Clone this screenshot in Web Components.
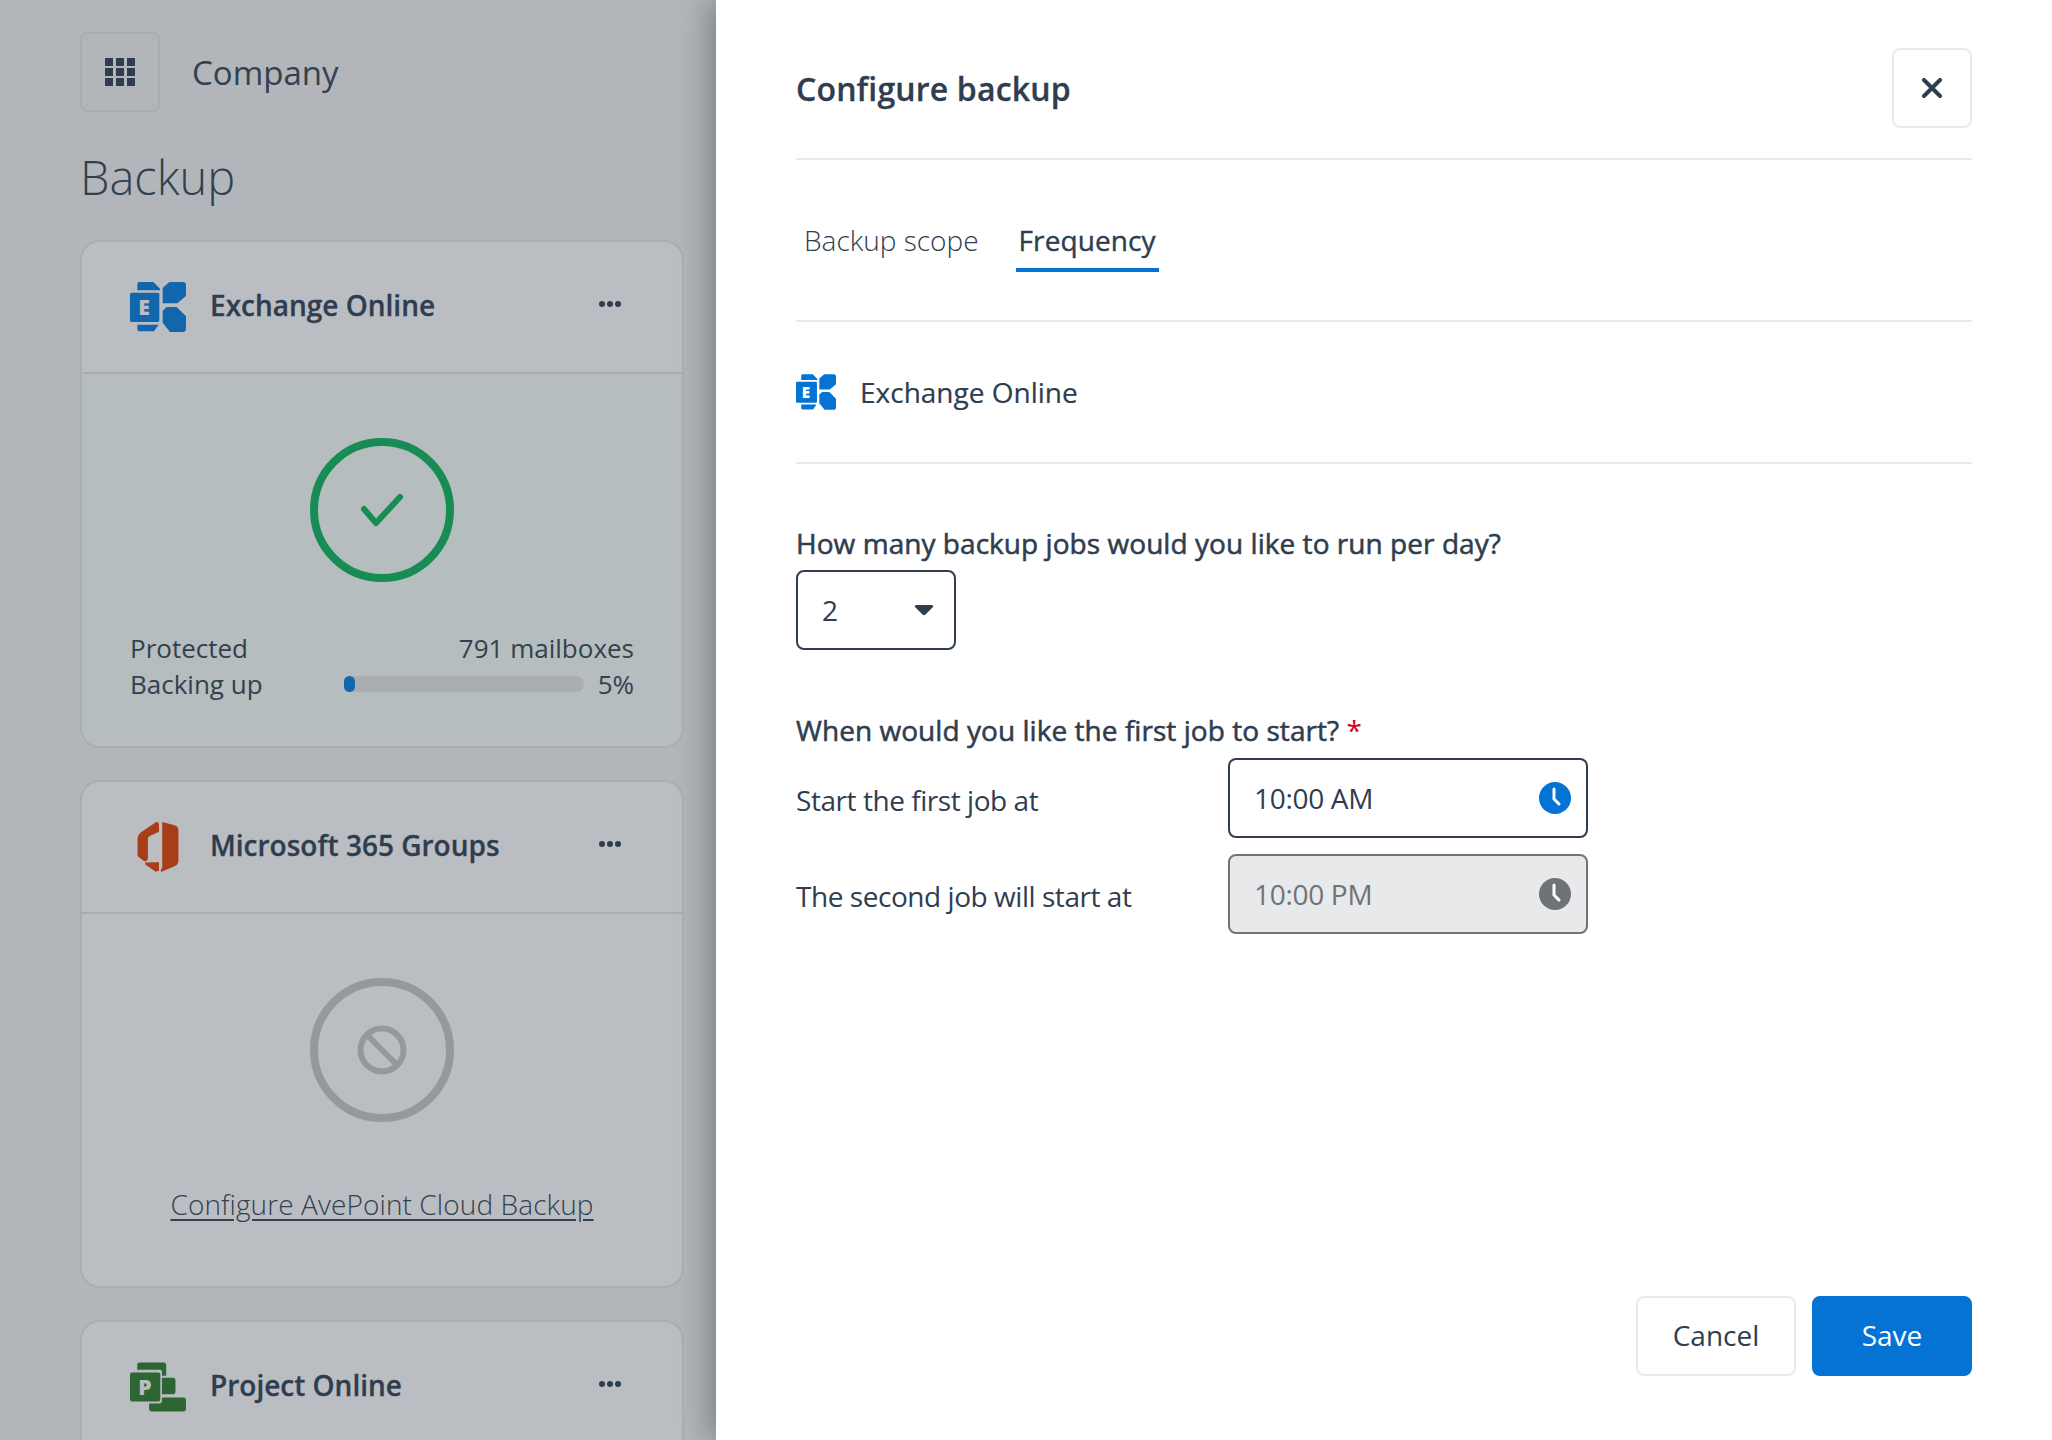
<!DOCTYPE html>
<html lang="en">
<head>
<meta charset="utf-8">
<title>Configure backup</title>
<style>
  html, body { margin: 0; height: 100%; }
  body { overflow: hidden; font-family: "Open Sans", "Noto Sans", sans-serif; color: #2f3d4f; }
</style>
</head>
<body>
<backup-page>
  <backup-panel slot="panel" company="Company" heading="Backup">
    <service-card name="Exchange Online" logo="exchange" state="ok">
      <status-rows></status-rows>
    </service-card>
    <service-card name="Microsoft 365 Groups" logo="office" state="off">
      <a-link>Configure AvePoint Cloud Backup</a-link>
    </service-card>
    <service-card name="Project Online" logo="project" state="off"></service-card>
  </backup-panel>
  <config-drawer slot="drawer" heading="Configure backup"></config-drawer>
</backup-page>

<script>
const LOGOS = {
  exchange: (color, letter) => `
    <svg viewBox="30 30 168 150" part="logo">
      <g fill="${color}">
        <path d="M58 30H100L120 50V55H52V36Q52 30 58 30Z"/>
        <rect x="30" y="62" width="88" height="88" rx="5"/>
        <path d="M52 158H116L102 178H58Q52 178 52 172Z"/>
        <path d="M148 30H188Q198 30 198 40V72L172 94H128V48Z"/>
        <path d="M128 116L140 105H170L198 133V168Q198 180 188 180H150L128 152Z"/>
      </g>
      <text x="72" y="130" text-anchor="middle" font-family="'Open Sans', sans-serif" font-weight="800" font-size="64" fill="${letter}">E</text>
    </svg>`,
  office: (color) => `
    <svg viewBox="52 28 126 154" part="logo">
      <g fill="${color}">
        <path d="M108 29Q118 26 118 36V58L88 72Q84 74 84 80V136Q84 152 72 148L58 138Q52 134 52 128V80Q52 68 62 60Z"/>
        <path d="M128 28L166 38Q178 42 178 54V146Q178 160 166 164L124 182V174L128 170Z"/>
        <path d="M75 153L118 152V178L108 181L77 160Z"/>
      </g>
    </svg>`,
  project: (color, letter) => `
    <svg viewBox="30 32 170 148" part="logo">
      <g fill="${color}">
        <path d="M58 32H132Q140 32 140 40V72H127V60Q127 54 120 54H52V38Q52 32 58 32Z"/>
        <rect x="30" y="62" width="92" height="88" rx="6"/>
        <path d="M127 78H160Q168 78 168 86V120Q168 128 160 128H127Z"/>
        <path d="M127 138H192Q200 138 200 146V172Q200 180 192 180H96Q88 180 88 172V156H118Q127 156 127 148Z"/>
      </g>
      <text x="75" y="130" text-anchor="middle" font-family="'Open Sans', sans-serif" font-weight="800" font-size="64" fill="${letter}">P</text>
    </svg>`
};

class BackupPage extends HTMLElement {
  constructor() {
    super();
    this.attachShadow({ mode: 'open' });
    this.shadowRoot.innerHTML = `
      <style>
        :host { display: flex; height: 1440px; width: 2052px; overflow: hidden; background: #b2b6ba; }
        .left { flex: 0 0 716px; overflow: hidden; }
        .right { flex: 1; display: flex; position: relative; background: #fff; box-shadow: -6px 0 30px rgba(0, 0, 0, .32); }
      </style>
      <div class="left"><slot name="panel"></slot></div>
      <div class="right"><slot name="drawer"></slot></div>
    `;
  }
}

class BackupPanel extends HTMLElement {
  constructor() {
    super();
    this.attachShadow({ mode: 'open' });
  }

  connectedCallback() {
    this.shadowRoot.innerHTML = `
      <style>
        :host { display: block; padding: 32px 32px 0 80px; }
        .top { display: flex; align-items: center; gap: 32px; height: 80px; }
        .grid {
          box-sizing: border-box; width: 80px; height: 80px; border: 2px solid #a9adb1; border-radius: 8px;
          display: flex; align-items: center; justify-content: center;
        }
        .company { font-size: 33px; color: #33414f; }
        h1 { margin: 0; font-size: 47px; font-weight: 300; line-height: 66px; padding: 32px 0 30px; color: #33414f; }
        ::slotted(service-card) { margin-bottom: 32px; }
      </style>
      <div class="top">
        <div class="grid">
          <svg width="30" height="28" viewBox="0 0 30 28" fill="#2f3d4f">
            ${[0, 10, 20].map(y => [0, 11, 22].map(x => `<rect x="${x}" y="${y}" width="8" height="8"/>`).join('')).join('')}
          </svg>
        </div>
        <span class="company">${this.getAttribute('company')}</span>
      </div>
      <h1>${this.getAttribute('heading')}</h1>
      <slot></slot>
    `;
  }
}

class ServiceCard extends HTMLElement {
  constructor() {
    super();
    this.attachShadow({ mode: 'open' });
  }

  connectedCallback() {
    const ok = this.getAttribute('state') === 'ok';
    const logoName = this.getAttribute('logo');
    const colors = { exchange: '#1266ad', office: '#a83e18', project: '#2d6632' };
    const ring = ok ? '#188c55' : '#95999e';
    const glyph = ok
      ? `<path d="M54 71L66 85L90 59" fill="none" stroke="${ring}" stroke-width="6" stroke-linecap="round" stroke-linejoin="round"/>`
      : `<circle cx="72" cy="72" r="21.5" fill="none" stroke="${ring}" stroke-width="6"/><path d="M57 57L87 87" stroke="${ring}" stroke-width="6"/>`;
    this.shadowRoot.innerHTML = `
      <style>
        :host {
          display: block; box-sizing: border-box; height: 508px; width: 604px;
          background: #babdc2; border: 2px solid #aaaeb2; border-radius: 20px; overflow: hidden;
        }
        .head { display: flex; align-items: center; height: 130px; padding: 0 48px; border-bottom: 2px solid #a9adb1; }
        .logo { width: 56px; height: 50px; margin-right: 24px; display: flex; justify-content: center; }
        .logo svg { height: 100%; width: ${logoName === 'office' ? '42px' : '100%'}; }
        .name { flex: 1; font-size: 28px; font-weight: 600; color: #2f3d4f; -webkit-text-stroke: .3px #2f3d4f; position: relative; top: -2px; }
        .dots { display: flex; gap: 2px; margin-right: 13px; position: relative; top: -3px; }
        .dots i { width: 6px; height: 6px; border-radius: 50%; background: #2f3d4f; }
        .body { height: 374px; box-sizing: border-box; padding: 64px 48px 0; text-align: center; ${ok ? 'background: #b5bdbe;' : ''} }
        .ring { display: block; margin: 0 auto 48px; }
      </style>
      <div class="head">
        <div class="logo">${LOGOS[logoName](colors[logoName], '#babdc2')}</div>
        <span class="name">${this.getAttribute('name')}</span>
        <div class="dots"><i></i><i></i><i></i></div>
      </div>
      <div class="body">
        <svg class="ring" width="144" height="144" viewBox="0 0 144 144">
          <circle cx="72" cy="72" r="68" fill="none" stroke="${ring}" stroke-width="8"/>
          ${glyph}
        </svg>
        <slot></slot>
      </div>
    `;
  }
}

class StatusRows extends HTMLElement {
  constructor() {
    super();
    this.attachShadow({ mode: 'open' });
    this.shadowRoot.innerHTML = `
      <style>
        :host { display: grid; grid-template-columns: 1fr 240px auto; font-size: 26px; line-height: 36px; color: #33414f; text-align: left; }
        .count { grid-column: 2 / 4; text-align: right; }
        .bar { align-self: center; height: 16px; border-radius: 8px; background: #aaaeb3; }
        .bar i { display: block; width: 11px; height: 100%; border-radius: 6px; background: #1266ad; }
        .pct { width: 50px; text-align: right; }
      </style>
      <span>Protected</span><span class="count">791 mailboxes</span>
      <span>Backing up</span><div class="bar"><i></i></div><span class="pct">5%</span>
    `;
  }
}

class ALink extends HTMLElement {
  constructor() {
    super();
    this.attachShadow({ mode: 'open' });
    this.shadowRoot.innerHTML = `
      <style>
        :host { display: block; padding-top: 14px; font-size: 28px; line-height: 40px; letter-spacing: .1px; }
        a { color: #33414f; font-weight: 300; text-decoration: underline; text-underline-offset: 4px; }
      </style>
      <a href="#"><slot></slot></a>
    `;
  }
}

class PickField extends HTMLElement {
  constructor() {
    super();
    this.attachShadow({ mode: 'open' });
  }

  connectedCallback() {
    const off = this.hasAttribute('disabled');
    const kind = this.getAttribute('kind');
    const clock = `
      <svg width="32" height="32" viewBox="0 0 32 32">
        <circle cx="16" cy="16" r="16" fill="${off ? '#6f7378' : '#0473d4'}"/>
        <path d="M15 7V17L20 22" fill="none" stroke="#fff" stroke-width="3" stroke-linecap="round" stroke-linejoin="round"/>
      </svg>`;
    const caret = `
      <svg width="20" height="12" viewBox="0 0 20 12">
        <path d="M3 1H17Q20 1 19 3L11.500 10.500Q10 12 8.500 10.500L1 3Q0 1 3 1Z" fill="#2f3d4f"/>
      </svg>`;
    this.shadowRoot.innerHTML = `
      <style>
        :host {
          display: flex; align-items: center; justify-content: space-between; box-sizing: border-box;
          width: ${kind === 'time' ? '360px' : '160px'}; height: 80px; padding: 0 ${kind === 'time' ? '15px' : '20px'} 0 24px;
          border: 2px solid ${off ? '#6f7378' : '#2f3d4f'}; border-radius: 8px;
          background: ${off ? '#e8e9eb' : '#fff'}; color: ${off ? '#6f7378' : '#2f3d4f'};
          font-size: 28px; font-weight: 400; letter-spacing: -.3px;
        }
      </style>
      <span><slot></slot></span>
      ${kind === 'time' ? clock : caret}
    `;
  }
}

class UiButton extends HTMLElement {
  constructor() {
    super();
    this.attachShadow({ mode: 'open' });
    this.shadowRoot.innerHTML = `
      <style>
        :host {
          display: inline-flex; align-items: center; justify-content: center; box-sizing: border-box;
          width: 160px; height: 80px; padding-bottom: 2px; border-radius: 8px; border: 2px solid #e8e9eb;
          font-size: 28px; color: #2f3d4f; background: #fff;
        }
        :host([primary]) { background: #0473d4; border-color: #0473d4; color: #fff; }
      </style>
      <slot></slot>
    `;
  }
}

class ConfigDrawer extends HTMLElement {
  constructor() {
    super();
    this.attachShadow({ mode: 'open' });
  }

  connectedCallback() {
    this.shadowRoot.innerHTML = `
      <style>
        :host { flex: 1; display: flex; flex-direction: column; box-sizing: border-box; height: 1440px; padding: 48px 80px 64px; }
        .title { display: flex; align-items: center; justify-content: space-between; height: 80px; padding-bottom: 30px; border-bottom: 2px solid #e8e9eb; }
        h2 { margin: 0; font-size: 32px; font-weight: 600; letter-spacing: .16px; -webkit-text-stroke: .3px #2f3d4f; color: #2f3d4f; }
        .close { box-sizing: border-box; width: 80px; height: 80px; border: 2px solid #e8e9eb; border-radius: 8px; display: flex; align-items: center; justify-content: center; }
        .tabs { display: flex; gap: 35px; height: 162px; box-sizing: border-box; padding: 56px 0 0 6px; border-bottom: 2px solid #e8e9eb; }
        .tab { height: 52px; padding: 0 2px; font-size: 28px; line-height: 48px; font-weight: 300; }
        .tab.on { font-weight: 400; letter-spacing: .1px; -webkit-text-stroke: .4px #2f3d4f; padding: 0 3px; border-bottom: 4px solid #0473d4; }
        .source { display: flex; align-items: center; gap: 24px; height: 142px; box-sizing: border-box; border-bottom: 2px solid #e8e9eb; font-size: 28px; -webkit-text-stroke: .2px #2f3d4f; }
        .source svg { width: 40px; height: 36px; }
        .q { font-size: 28px; line-height: 40px; font-weight: 400; letter-spacing: .05px; -webkit-text-stroke: .55px #2f3d4f; }
        .q.first { margin-top: 59px; margin-bottom: 7px; }
        .q.second { margin-top: 60px; margin-bottom: 8px; }
        .q b { color: #d0021b; font-weight: 500; -webkit-text-stroke: 0; }
        .row { display: flex; align-items: center; justify-content: flex-start; margin-bottom: 16px; font-size: 28px; font-weight: 400; letter-spacing: -.45px; }
        .row span { width: 432px; position: relative; top: 2px; }
        .foot { margin-top: auto; display: flex; justify-content: flex-end; gap: 16px; }
      </style>
      <div class="title">
        <h2>${this.getAttribute('heading')}</h2>
        <div class="close">
          <svg width="20" height="20" viewBox="0 0 20 20"><path d="M2 2L18 18M18 2L2 18" stroke="#2f3d4f" stroke-width="4" stroke-linecap="round"/></svg>
        </div>
      </div>
      <div class="tabs">
        <div class="tab">Backup scope</div>
        <div class="tab on">Frequency</div>
      </div>
      <div class="source">${LOGOS.exchange('#0473d4', '#fff')}<span>Exchange Online</span></div>
      <div class="q first">How many backup jobs would you like to run per day?</div>
      <pick-field kind="select">2</pick-field>
      <div class="q second">When would you like the first job to start? <b>*</b></div>
      <div class="row"><span>Start the first job at</span><pick-field kind="time">10:00 AM</pick-field></div>
      <div class="row"><span>The second job will start at</span><pick-field kind="time" disabled>10:00 PM</pick-field></div>
      <div class="foot"><ui-button>Cancel</ui-button><ui-button primary>Save</ui-button></div>
    `;
  }
}

customElements.define('backup-page', BackupPage);
customElements.define('backup-panel', BackupPanel);
customElements.define('service-card', ServiceCard);
customElements.define('status-rows', StatusRows);
customElements.define('a-link', ALink);
customElements.define('pick-field', PickField);
customElements.define('ui-button', UiButton);
customElements.define('config-drawer', ConfigDrawer);
</script>
</body>
</html>
